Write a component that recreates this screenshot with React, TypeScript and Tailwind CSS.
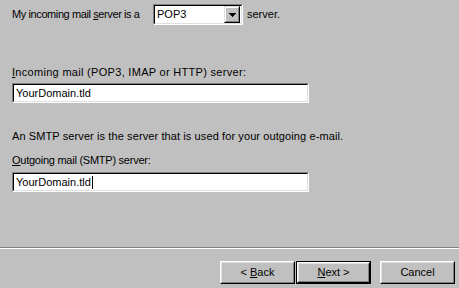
import React from "react"

const font = { fontFamily: '"Liberation Sans", Arial, sans-serif' }

function Sunken({ children, className = "" }: { children: React.ReactNode; className?: string }) {
    return (
        <div className={`border border-t-[#808080] border-l-[#808080] border-r-white border-b-white ${className}`}>
            <div className="h-full border border-t-black border-l-black border-r-[#dfdfdf] border-b-[#dfdfdf] bg-white">
                {children}
            </div>
        </div>
    )
}

function Button({ children, isDefault = false }: { children: React.ReactNode; isDefault?: boolean }) {
    return (
        <div className={`h-[23px] w-[75px] ${isDefault ? "border border-black" : ""}`}>
            <div className="h-full border border-t-white border-l-white border-r-black border-b-black">
                <div className="flex h-full items-center justify-center border border-t-[#dfdfdf] border-l-[#dfdfdf] border-r-[#808080] border-b-[#808080] text-[11px] text-black">
                    {children}
                </div>
            </div>
        </div>
    )
}

export default function App() {
    return (
        <div className="flex h-[288px] w-[459px] flex-col bg-[#c0c0c0] text-[11px] leading-[13px] text-black" style={font}>
            <div className="flex flex-col px-[12px]">
                {/* server type row */}
                <div className="mt-[4px] flex h-[21px] items-center">
                    <span className="w-[141px] tracking-[-0.4px]">
                        My incoming mail <span className="underline">s</span>erver is a
                    </span>
                    <Sunken className="h-[21px] w-[90px]">
                        <div className="flex h-full items-center justify-between pl-[2px] pr-[1px]">
                            <span>POP3</span>
                            <div className="h-[17px] w-[16px] border border-t-[#dfdfdf] border-l-[#dfdfdf] border-r-black border-b-black bg-[#c0c0c0]">
                                <div className="flex h-full items-center justify-center border border-t-white border-l-white border-r-[#808080] border-b-[#808080]">
                                    <svg width="7" height="4" viewBox="0 0 7 4">
                                        <path d="M0 0h7v1h-1v1h-1v1h-1v1h-1v-1h-1v-1h-1v-1h-1z" fill="black" />
                                    </svg>
                                </div>
                            </div>
                        </div>
                    </Sunken>
                    <span className="ml-[4px]">server.</span>
                </div>

                <div className="mt-[41px] tracking-[0.3px]">
                    <span className="underline">I</span>ncoming mail (POP3, IMAP or HTTP) server:
                </div>
                <Sunken className="mt-[4px] h-[20px] w-[297px]">
                    <div className="flex h-full items-center pl-[2px]">YourDomain.tld</div>
                </Sunken>

                <div className="mt-[27px] tracking-[0.1px]">An SMTP server is the server that is used for your outgoing e-mail.</div>

                <div className="mt-[11px] tracking-[-0.25px]">
                    <span className="underline">O</span>utgoing mail (SMTP) server:
                </div>
                <Sunken className="mt-[5px] h-[20px] w-[297px]">
                    <div className="flex h-full items-center pl-[2px]">
                        YourDomain.tld
                        <span className="ml-[1px] h-[13px] w-[1px] bg-black" />
                    </div>
                </Sunken>
            </div>

            <div className="flex-1" />

            {/* separator */}
            <div className="border-t border-b border-t-[#808080] border-b-white" />

            <div className="mb-[4px] mt-[12px] flex justify-end pr-[4px]">
                <Button>
                    &lt; <span className="ml-[3px] underline">B</span>ack
                </Button>
                <div className="ml-[1px]">
                    <Button isDefault>
                        <span className="underline">N</span>ext &gt;
                    </Button>
                </div>
                <div className="ml-[9px]">
                    <Button>Cancel</Button>
                </div>
            </div>
        </div>
    )
}
